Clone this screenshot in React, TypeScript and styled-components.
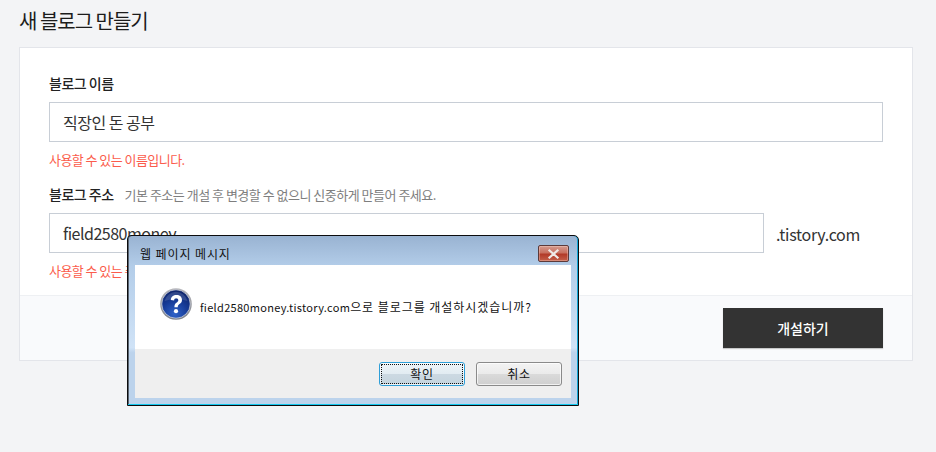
import React from "react";
import styled, { createGlobalStyle } from "styled-components";

const Global = createGlobalStyle`
  html, body { margin: 0; padding: 0; background: #f3f4f6; }
  body { font-family: "Noto Sans CJK KR", "Noto Sans", sans-serif; }
  * { box-sizing: border-box; }
`;

const Page = styled.div`
  position: relative;
  width: 936px;
  height: 452px;
  overflow: hidden;
  padding: 0 23px 0 19px;
`;

const Title = styled.h1`
  margin: 0;
  height: 47px;
  padding-top: 6px;
  font-size: 20px;
  line-height: 30px;
  font-weight: 400;
  color: #1c1c1c;
  letter-spacing: -1px;
`;

const Card = styled.div`
  height: 314px;
  background: #fff;
  border: 1px solid #e3e5ea;
  display: flex;
  flex-direction: column;
`;

const Body = styled.div`
  flex: 1;
  padding: 25px 29px 0;
`;

const Label = styled.div`
  display: flex;
  align-items: baseline;
  gap: 11px;
  height: 20px;
  margin-bottom: 9px;
  font-size: 14px;
  line-height: 20px;
  font-weight: 500;
  color: #222;
  letter-spacing: -0.5px;
`;

const Hint = styled.span`
  font-size: 13px;
  font-weight: 400;
  color: #7e7e7e;
  letter-spacing: -0.5px;
`;

const InputRow = styled.div`
  display: flex;
  align-items: center;
`;

const Field = styled.div<{ $width: number }>`
  width: ${(p) => p.$width}px;
  height: 40px;
  border: 1px solid #c8ced6;
  padding: 1px 13px 0;
  font-size: 16px;
  line-height: 36px;
  color: #333;
  letter-spacing: -0.5px;
  background: #fff;
`;

const Suffix = styled.span`
  margin: 2px 0 0 12px;
  font-size: 16px;
  color: #333;
  letter-spacing: -0.3px;
`;

const Message = styled.div`
  height: 18px;
  margin: 9px 0 15px;
  font-size: 13px;
  line-height: 18px;
  color: #fb5c4c;
  letter-spacing: -0.55px;
`;

const Footer = styled.div`
  height: 65px;
  border-top: 1px solid #eef0f3;
  background: #f9fafc;
  padding: 12px 29px 0;
  display: flex;
  justify-content: flex-end;
  align-items: flex-start;
`;

const Submit = styled.button`
  width: 160px;
  height: 40px;
  border: 0;
  background: #333;
  color: #fff;
  font-family: inherit;
  font-size: 14px;
  font-weight: 500;
  box-shadow: 0 1px 1px rgba(0, 0, 0, 0.2);
`;

const Dialog = styled.div`
  position: absolute;
  left: 127px;
  top: 235px;
  width: 452px;
  height: 171px;
  border: 1px solid #0c0c0e;
  border-top-left-radius: 4px;
  border-top-right-radius: 5px;
  background: linear-gradient(180deg, #99b3d2 0%, #b3cde9 18%, #d0e3f7 66%, #bcd3ec 69%, #bcd3ec 100%);
  box-shadow: inset 0 -1px 0 #12c8ee, inset -1px 0 0 #12a6d6, inset 1px 0 0 #5a6470;
  display: flex;
  flex-direction: column;
  padding: 0 7px 7px 7px;
  font-family: "Noto Sans CJK KR", "DejaVu Sans", sans-serif;
`;

const DialogBar = styled.div`
  height: 29px;
  display: flex;
  align-items: flex-start;
  justify-content: space-between;
  padding: 9px 2px 0 5px;
  font-size: 12px;
  line-height: 18px;
  letter-spacing: 0.9px;
  color: #111;
`;

const Close = styled.div`
  width: 31px;
  height: 17px;
  border: 1px solid #5c3a3a;
  border-radius: 2px;
  box-shadow: inset 0 0 0 1px rgba(255, 220, 210, 0.35);
  background: linear-gradient(180deg, #d49a8f 0%, #c8705f 45%, #b23a28 55%, #c4604a 100%);
  display: flex;
  align-items: center;
  justify-content: center;
`;

const DialogContent = styled.div`
  height: 84px;
  background: #fff;
  display: flex;
  align-items: center;
  padding: 0 0 0 25px;
  gap: 8px;
  font-size: 12px;
  letter-spacing: 0.95px;
  color: #111;
`;

const IconWrap = styled.div`
  display: flex;
  margin-bottom: 6px;
`;

const Prompt = styled.span`
  margin-bottom: 2px;
`;

const Host = styled.span`
  font-size: 11px;
  letter-spacing: 0.3px;
`;

const DialogActions = styled.div`
  flex: 1;
  background: #efefef;
  display: flex;
  justify-content: flex-end;
  align-items: flex-start;
  gap: 11px;
  padding: 13px 9px 0 0;
`;

const DialogButton = styled.button<{ $primary?: boolean }>`
  width: 86px;
  height: 24px;
  padding: 0 0 2px;
  font-family: inherit;
  font-size: 12px;
  letter-spacing: 0.6px;
  color: #111;
  border-radius: 3px;
  border: 1px solid ${(p) => (p.$primary ? "#2f9fd8" : "#8a8a8a")};
  background: ${(p) =>
    p.$primary
      ? "linear-gradient(180deg, #eef4f8 0%, #e2ecf2 48%, #ccd9e2 52%, #c4d4de 100%)"
      : "linear-gradient(180deg, #f3f3f3 0%, #ebebeb 48%, #dadada 52%, #cfcfcf 100%)"};
  outline: ${(p) => (p.$primary ? "1px dotted #111" : "none")};
  outline-offset: -3px;
  box-shadow: inset 0 0 0 1px rgba(255, 255, 255, 0.7);
`;

const QuestionIcon = () => (
  <svg width="32" height="32" viewBox="0 0 32 32">
    <defs>
      <linearGradient id="ring" x1="0" y1="0" x2="0" y2="1">
        <stop offset="0" stopColor="#b8b8bc" />
        <stop offset="1" stopColor="#7f838c" />
      </linearGradient>
      <radialGradient id="ball" cx="0.45" cy="0.85" r="0.85">
        <stop offset="0" stopColor="#2f62c8" />
        <stop offset="0.55" stopColor="#163a96" />
        <stop offset="1" stopColor="#0e2266" />
      </radialGradient>
    </defs>
    <circle cx="16" cy="16" r="15.8" fill="url(#ring)" />
    <circle cx="16" cy="16" r="14.2" fill="url(#ball)" stroke="#eceef2" strokeWidth="0.6" />
    <path d="M4.5 13 A11.8 11.8 0 0 1 27.5 13 Q16 9 4.5 13Z" fill="#fff" opacity="0.14" />
    <path
      d="M10.8 12 C11 8.8 13.4 7 16.4 7 C19.8 7 22 9 22 11.9 C22 14.2 20.6 15.2 19.2 16.2 C18 17.1 17.8 17.7 17.8 19.2 H14.4 C14.4 16.8 15 15.7 16.4 14.7 C17.6 13.8 18.3 13.3 18.3 12.2 C18.3 11 17.5 10.2 16.2 10.2 C14.9 10.2 14.2 11 14.1 12.4 Z"
      fill="#fff"
    />
    <circle cx="16" cy="23.2" r="2.1" fill="#fff" />
  </svg>
);

export default function App() {
  return (
    <Page>
      <Global />
      <Title>새 블로그 만들기</Title>
      <Card>
        <Body>
          <Label>블로그 이름</Label>
          <InputRow>
            <Field $width={834}>직장인 돈 공부</Field>
          </InputRow>
          <Message>사용할 수 있는 이름입니다.</Message>
          <Label>
            블로그 주소
            <Hint>기본 주소는 개설 후 변경할 수 없으니 신중하게 만들어 주세요.</Hint>
          </Label>
          <InputRow>
            <Field $width={715}>field2580money</Field>
            <Suffix>.tistory.com</Suffix>
          </InputRow>
          <Message>사용할 수 있는 주소입니다.</Message>
        </Body>
        <Footer>
          <Submit>개설하기</Submit>
        </Footer>
      </Card>
      <Dialog>
        <DialogBar>
          웹 페이지 메시지
          <Close>
            <svg width="13" height="10" viewBox="0 0 13 10">
              <path d="M2.5 1.5 L10.5 8.5 M10.5 1.5 L2.5 8.5" stroke="#efe9e6" strokeWidth="2.2" strokeLinecap="square" />
            </svg>
          </Close>
        </DialogBar>
        <DialogContent>
          <IconWrap>
            <QuestionIcon />
          </IconWrap>
          <Prompt>
            <Host>field2580money.tistory.com</Host>으로 블로그를 개설하시겠습니까?
          </Prompt>
        </DialogContent>
        <DialogActions>
          <DialogButton $primary>확인</DialogButton>
          <DialogButton>취소</DialogButton>
        </DialogActions>
      </Dialog>
    </Page>
  );
}
